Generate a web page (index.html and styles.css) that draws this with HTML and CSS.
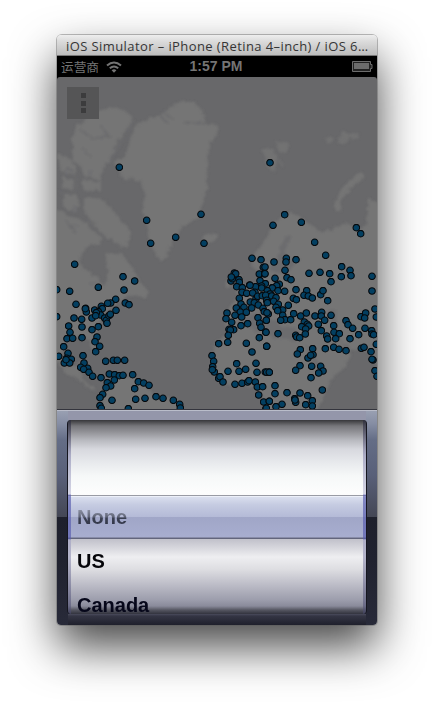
FILE: index.html
```html
<!DOCTYPE html>
<html lang="en">
<head>
<meta charset="utf-8">
<title>iOS Simulator</title>
<link rel="stylesheet" href="styles.css">
</head>
<body>
<main class="window">
  <header class="titlebar"><span class="title">iOS Simulator – iPhone (Retina 4–inch) / iOS 6…</span></header>
  <div class="status">
    <div class="carrier"><span lang="zh">运营商</span>
      <svg class="wifi" width="16" height="12" viewBox="0 0 16 12" fill="none" stroke="#747474" stroke-width="2"><path d="M1 4.6Q8-1.6 15 4.6M3.8 7.3Q8 3.7 12.2 7.3"/><path d="M5.6 9.2Q8 7.2 10.4 9.2L8 11.7Z" fill="#747474" stroke="none"/></svg>
    </div>
    <span class="time">1:57 PM</span>
    <svg class="battery" width="21" height="11" viewBox="0 0 21 11"><path d="M.5.5h18v3h1.5v4h-1.5v3h-18z" fill="#222" stroke="#6c6c6c"/><path d="M2 2h15v6H2z" fill="#6c6c6c"/></svg>
  </div>
  <section class="map">
    <svg class="world" width="320" height="332" viewBox="57 77 320 332">
      <defs>
        <filter id="coast" x="-5%" y="-5%" width="110%" height="110%">
          <feTurbulence type="fractalNoise" baseFrequency=".2" numOctaves="2" seed="4" result="n"/>
          <feDisplacementMap in="SourceGraphic" in2="n" scale="6" xChannelSelector="R" yChannelSelector="G"/>
          <feGaussianBlur stdDeviation=".8"/>
        </filter>
        <marker id="pin" viewBox="-4 -4 8 8" markerWidth="24" markerHeight="24" markerUnits="userSpaceOnUse">
          <circle r="3.3" fill="#033f61" stroke="#06090c" stroke-width="1.05"/>
        </marker>
      </defs>
      <g filter="url(#coast)">
        <g fill="#757575">
          <path d="M150 118L161 115L172 105L183 101L195 103L205 115L204 124L218 125L217 134L210 143L207 167L208 188L202 203L199 217L183 227L173 240L167 256L162 261L153 251L147 236L148 224L142 210L145 193L139 180L122 179L117 168L114 161L125 157L128 146L134 127Z"/>
          <path d="M72 143L76 127L93 113L110 107L125 110L133 118L128 128L117 143L112 157L103 168L101 181L84 176L80 166L73 160Z"/>
          <path d="M58 153L70 159L77 168L74 176L60 169ZM63 176L74 181L73 190L62 188ZM83 179L101 182L101 191L83 190ZM64 195L78 194L80 206L70 211L62 204ZM84 198L101 198L113 210L124 223L132 234L127 248L116 243L105 236L94 224L84 212Z"/>
          <path d="M50 206L72 217L83 220L90 228L102 238L101 246L91 244L83 252L79 261L86 271L98 277L103 287L108 278L107 263L105 253L119 253L128 260L140 280L148 292L145 298L127 296L120 302L108 310L101 318L99 327L94 338L97 351L92 350L89 340L80 338L72 339L64 344L61 356L67 367L76 366L80 360L85 363L80 371L84 382L93 387L97 391L91 390L79 380L68 375L58 363L50 365Z"/>
          <path d="M104 392L108 382L119 375L136 378L147 385L153 396L169 398L181 405L182 416L100 416Z"/>
          <path d="M201 240L204 235L215 233L219 237L213 243L204 244Z"/>
          <path d="M262 149L273 148L277 161L274 173L267 165ZM275 143L284 142L290 146L285 153L278 151ZM278 158L284 168L280 165ZM324 139L332 137L334 142L327 143ZM338 142L343 130L350 134L358 133L360 138L350 139L343 145Z" opacity=".75"/>
          <path d="M339 210L337 204Q346 184 363 175" fill="none" stroke="#747474" stroke-width="6"/>
          <path d="M254 254L252 265L258 272L263 267L267 273L262 280L253 284L246 289L236 291L237 299L230 306L226 317L225 326L230 332L216 342L211 359L212 372L222 384L239 387L256 386L262 396L266 416L315 416L324 396L333 376L344 368L352 351L364 348L370 355L385 379V210L371 199L368 198L366 224L358 230L347 223L332 229L322 233L310 224L298 216L287 212L274 222L267 238Z"/>
          <path d="M235 270L241 277L242 286L233 288L236 279L231 275ZM227 279L232 278L231 287L225 288Z"/>
        </g>
        <path fill="#6c6c6e" d="M278 255L283 241L289 235L291 240L284 251L290 260L302 259L294 265L287 273L276 273L270 268L274 263ZM239 323L254 313L266 316L276 321L283 329L293 326L300 332L303 337L294 341L285 338L273 339L265 332L252 330ZM295 315L307 312L318 318L304 321ZM329 311L336 310L337 328L331 326ZM304 342L309 347L322 369L317 368ZM337 336L344 344L351 347L344 350Z"/>
        <path d="M80 129L92 139L109 136L99 126M83 147L91 158M133 119L128 135L117 148L110 162M159 116L168 124M163 112L174 119M183 122L194 122L204 124M66 166L78 178L76 193M57 191L71 195M87 219L94 226M65 221L76 232" fill="none" stroke="#6b6b6d" stroke-width="1.8"/>
        <path fill="#707072" d="M65 169h3v5h-3zM88 170h5v5h-5zM73 205h4v8h-4zM72 224h7v2h-7zM89 282h8v3h-8z"/>
      </g>
      <g class="pins">
        <polyline transform="translate(50 90) scale(.33333)" points="208,232 290,391 453,373 377,442 302,460 462,460"/>
        <polyline transform="translate(215 90) scale(.33333)" points="165,218 209,374 174,406 259,397 299,457 424,413 437,431"/>
        <polyline transform="translate(50 245) scale(.33333)" points="74,58 219,95 254,108 145,127 222,135 20,134 59,139 20,215 78,178 197,163 182,174 173,175 226,174 237,179 107,190 109,201 106,191 134,195 154,184 157,191 145,200 152,210 139,203 164,219 126,219 137,212 169,226 171,235 177,212 198,196 181,208 72,219 95,223 56,243 96,246 60,262 51,281 68,280 96,278 145,245 126,254 141,276 135,290 149,304 137,320 41,305 26,334 54,325 50,340 64,343 43,354 59,354 48,344 99,332 102,354 92,367 113,370 101,373 117,382 128,394 167,349 190,346 202,346 224,346 153,398 178,387 194,389 208,392 219,391 248,389 193,405 172,413 182,423 168,428 265,410 281,414 297,421 254,431 158,448 150,458 186,466 257,463 285,460 150,482 154,490 235,491"/>
        <polyline transform="translate(155 245) scale(.33333)" points="3,455 24,460 55,466 74,478 76,489 291,40 318,44 325,67 313,87 329,87 238,84 242,86 228,108 232,101 229,96 252,104 253,112 245,125 262,128 261,142 275,145 284,120 302,125 285,121 315,107 331,116 320,123 300,142 293,144 320,129 338,137 352,128 303,161 308,154 322,152 348,150 253,160 258,177 244,189 267,187 256,201 274,202 240,211 260,216 286,171 298,173 290,189 310,180 324,190 328,200 340,207 337,171 350,155 216,204 213,221 230,232 222,253 236,254 226,255 220,271 218,292 258,242 278,236 309,218 314,235 334,226 318,247 332,261 313,278 335,304 191,296 274,295 291,321 171,332 176,349 173,365 178,381 172,374 191,400 195,395 204,411 219,379 245,356 252,379 272,373 303,355 306,382 331,381 342,381 240,418 261,415 278,411 282,407 301,411 307,426 323,425 311,450 326,471 343,469 333,490"/>
        <polyline transform="translate(265 245) scale(.33333)" points="182,31 27,51 64,40 63,51 93,44 0,66 0,86 60,76 30,100 66,98 78,104 132,85 165,82 194,86 198,110 230,65 255,76 258,92 229,95 321,94 321,138 43,118 35,122 22,129 7,137 39,137 59,139 93,134 125,137 85,160 94,164 117,151 130,153 142,159 167,149 174,137 188,167 15,147 2,151 20,153 5,166 33,158 26,169 7,173 40,178 70,181 33,187 53,195 38,197 6,203 53,211 4,226 60,224 47,226 77,224 86,206 107,213 124,204 150,213 170,202 169,213 179,226 198,211 118,231 127,238 110,245 131,243 122,252 121,267 92,271 95,276 104,278 3,262 39,266 160,238 169,257 206,242 207,262 223,266 185,273 212,281 188,282 243,227 249,239 263,250 288,215 302,204 299,219 330,192 334,216 281,269 255,281 300,250 320,257 321,267 326,269 334,298 5,304 143,311 106,314 97,327 144,329 129,339 137,331 181,311 206,307 222,313 243,317 289,310 297,307 318,320 324,345 321,343 330,377 336,394 5,382 13,382 105,362 92,376 140,364 167,364 174,378 161,384 138,398 30,422 30,446 66,443 105,444 128,452 172,435 89,461 92,472 90,465 142,467 51,478 122,479 142,483 33,485 13,469 4,490"/>
      </g>
    </svg>
    <button class="menu" aria-label="Menu"><i></i><i></i><i></i></button>
  </section>
  <section class="picker">
    <div class="wheel">
      <div class="row"></div>
      <div class="row selected"><span>None</span></div>
      <div class="row">US</div>
      <div class="row last">Canada</div>
    </div>
  </section>
</main>
</body>
</html>
```
FILE: styles.css
```css
* { box-sizing: border-box; }
body { margin: 0; height: 704px; overflow: hidden; background: #fff; padding: 35px 57px; font-family: "Liberation Sans", "Noto Sans CJK SC", sans-serif; }
.window { width: 320px; height: 590px; border-radius: 5px 5px 4px 4px; box-shadow: 0 0 0 1px rgba(90,90,90,.4), 0 22px 46px rgba(0,0,0,.72); }
.titlebar { height: 21px; border-radius: 4px 4px 0 0; background: linear-gradient(#eee, #dcdcdc 30%, #bdbdbd); border-bottom: 1px solid #777; padding-left: 9px; overflow: hidden; white-space: nowrap; }
.title { display: block; font: 13px/23px "Open Sans", sans-serif; color: #353535; letter-spacing: .41px; }
.status { height: 21px; background: #000; color: #747474; display: grid; grid-template-columns: 1fr auto 1fr; align-items: center; padding: 0 4px 0 4px; }
.carrier { display: flex; align-items: center; gap: 7px; font: 12.7px/20px "Noto Sans CJK SC", sans-serif; }
.time { font-size: 14px; font-weight: bold; line-height: 21px; position: relative; left: -1px; }
.battery { justify-self: end; }
.map { height: 332px; position: relative; overflow: hidden; background: #68686a; border-radius: 3px 3px 0 0; box-shadow: 0 -4px 0 #000; }
.world { display: block; }
.pins polyline { fill: none; stroke: none; marker: url(#pin); }
.menu { position: absolute; left: 10px; top: 10px; width: 32px; height: 32px; padding: 0; border: 0; background: #555556; display: flex; flex-direction: column; align-items: center; justify-content: center; gap: 2.5px; }
.menu i { width: 5px; height: 5px; background: #3c3c3d; }
.picker { height: 216px; padding: 10px 10px 11px; border-top: 1px solid #34353d; border-radius: 0 0 4px 4px; background:
  linear-gradient(#babdca, #babdca) 0 0 / 100% 1px no-repeat,
  linear-gradient(#9496aa, #9496aa) 11px 0 / 298px 10px no-repeat,
  linear-gradient(#4a4b5c, #343544 2px, #1f202c) 11px 100% / 298px 11px no-repeat,
  linear-gradient(#9aa1b3, #858da3 14px, #646d86 30px, #596079 65px, #444755 107px, #1e202c 107px, #20222f 150px, #282a39); }
.wheel { height: 194px; border-radius: 4px; overflow: hidden; position: relative; display: grid; grid-template-rows: 75px 44px 44px 31px; border: solid #15161f; border-width: 0 1px; background: linear-gradient(#37373a, #77777b 6px, #929297 12px, #b7b8be 20px, #d7d8de 29px, #e8eaed 43px, #f6f8f8 56px, #fdfdfd 74px, #c3c3cc 120px, #eeeef1 137px, #dedee2 149px, #c0c0ca 163px, #9c9dac 180px, #8a8b9b 186px, #555661 190px, #32333e); }
.wheel::before, .wheel::after { content: ""; position: absolute; top: 0; bottom: 0; width: 3px; background: linear-gradient(rgba(45,45,60,.75), rgba(135,135,175,.6) 35px, rgba(190,190,215,.65) 74px, rgba(86,90,174,.65) 75px, rgba(86,90,174,.65) 119px, rgba(160,160,195,.6) 120px, rgba(75,75,110,.6)); z-index: 1; }
.wheel::before { left: 0; }
.wheel::after { right: 0; }
.row { padding-left: 9px; font-size: 20px; font-weight: bold; line-height: 44px; color: #050509; letter-spacing: 0; overflow: hidden; }
.selected { border-top: 1px solid #999ba4; border-bottom: 1px solid #62657c; box-shadow: inset 0 1px #edf0f9, inset 0 -1px #888ca8; line-height: 43px; background: linear-gradient(#dce1f0, #c5cbe1 9px, #b4bad7 21px, #a0a6c7 21px, #a8aed0); }
.selected span { background: linear-gradient(#868b9e 20%, #606577 50%, #3c4153 55%, #2d3142); background-clip: text; -webkit-background-clip: text; color: transparent; }
.last { color: #06071a; }
```
